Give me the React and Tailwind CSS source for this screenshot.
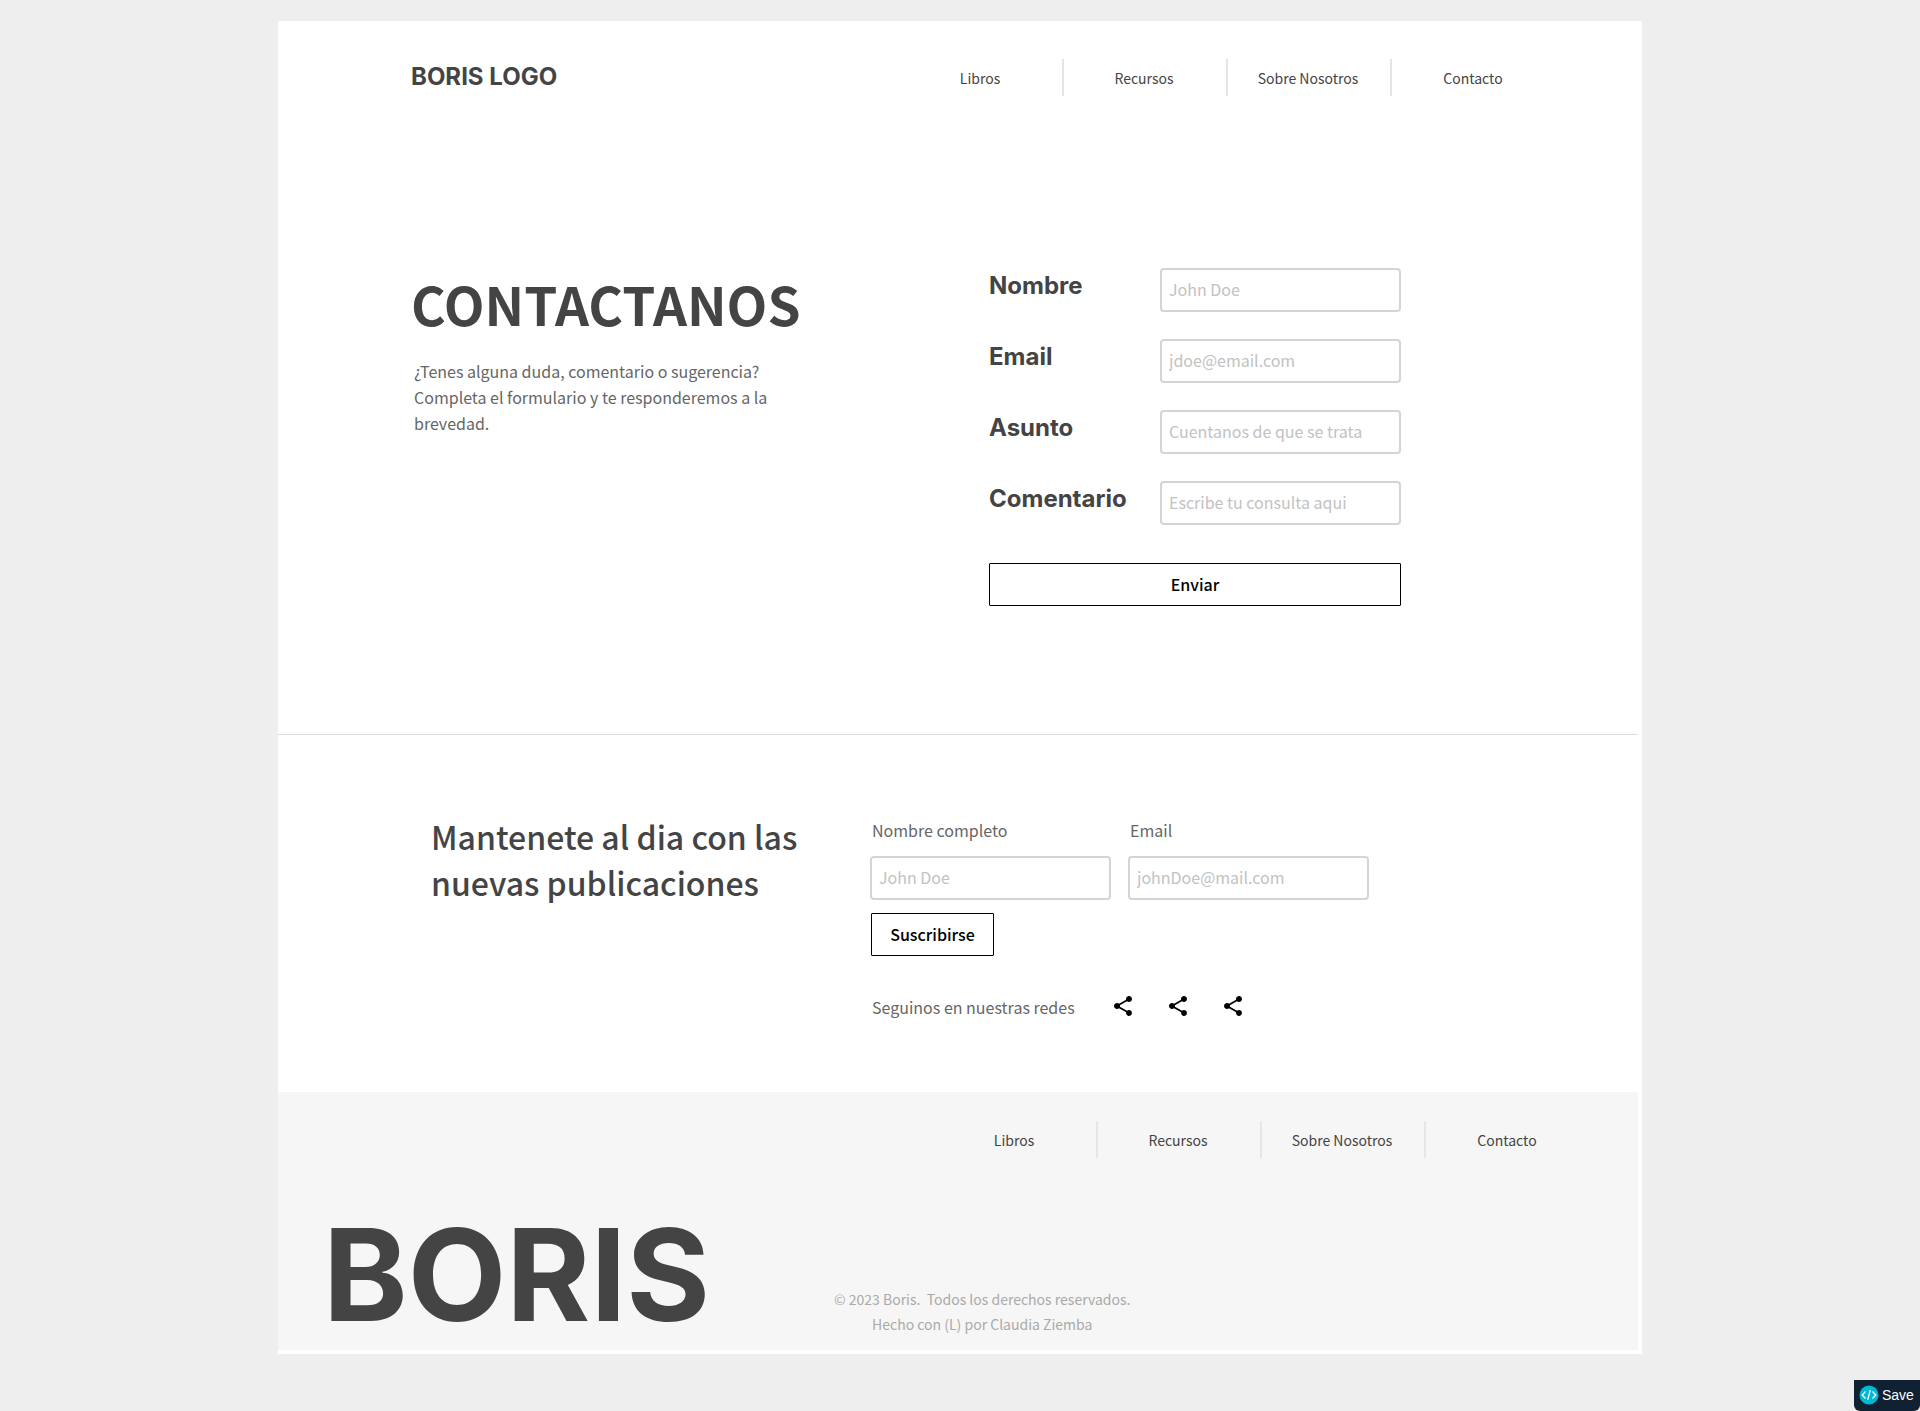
import { MdShare } from "react-icons/md";

const links = ["Libros", "Recursos", "Sobre Nosotros", "Contacto"];

const contactFields = [
  { id: "nombre", label: "Nombre", type: "text", placeholder: "John Doe" },
  { id: "email", label: "Email", type: "email", placeholder: "jdoe@email.com" },
  { id: "asunto", label: "Asunto", type: "text", placeholder: "Cuentanos de que se trata" },
  { id: "comentario", label: "Comentario", type: "text", placeholder: "Escribe tu consulta aqui" },
];

const newsletterFields = [
  { id: "news-nombre", label: "Nombre completo", type: "text", placeholder: "John Doe" },
  { id: "news-email", label: "Email", type: "email", placeholder: "johnDoe@mail.com" },
];

function NavLinks({ label }) {
  return (
    <nav aria-label={label}>
      <ul className="grid grid-cols-4 divide-x-2 divide-[#e6e6e6]">
        {links.map((text) => (
          <li key={text} className="flex h-[37px] w-[164px] items-center justify-center pr-0.5">
            <a href="#" className="text-sm leading-5 whitespace-nowrap text-[#444]">
              {text}
            </a>
          </li>
        ))}
      </ul>
    </nav>
  );
}

function TextField({ id, type, placeholder }) {
  return (
    <input
      id={id}
      type={type}
      placeholder={placeholder}
      className="h-11 w-full min-w-0 rounded border-2 border-[#d4d4d4] bg-white px-[7px] pb-0.5 text-base text-[#444] placeholder:text-[#c2c2c2]"
    />
  );
}

export default function App() {
  return (
    <div className="min-h-screen bg-[#eee] pt-[21px] pb-[57px] font-['Noto_Sans_CJK_JP','Noto_Sans',sans-serif] text-[#444]">
      <div className="mx-auto w-full max-w-[1364px] bg-white pr-1 pb-1">
        <header className="flex items-center justify-between pt-[38px] pr-[82px] pl-[133px]">
          <a href="#" className="pb-0.5 font-['Inter',sans-serif] text-2xl leading-7 font-bold">
            BORIS LOGO
          </a>
          <NavLinks label="Principal" />
        </header>

        <main>
          <section className="mt-[172px] grid grid-cols-[minmax(0,578fr)_minmax(0,412fr)] pr-[237px] pb-32 pl-[133px]">
            <div className="pt-[3px]">
              <h1 className="text-[53px] leading-[64px] font-bold">CONTACTANOS</h1>
              <p className="mt-[23px] max-w-[372px] pl-[3px] text-base leading-[26px] text-[#666]">
                ¿Tenes alguna duda, comentario o sugerencia? Completa el formulario y te
                responderemos a la brevedad.
              </p>
            </div>
            <form>
              <div className="flex flex-col gap-[27px]">
                {contactFields.map((field) => (
                  <div key={field.id} className="grid grid-cols-[minmax(0,171fr)_minmax(0,241fr)]">
                    <label
                      htmlFor={field.id}
                      className="flex items-center pb-2 font-['Inter',sans-serif] text-2xl leading-7 font-bold"
                    >
                      {field.label}
                    </label>
                    <TextField {...field} />
                  </div>
                ))}
              </div>
              <button
                type="button"
                className="mt-[38px] h-[43px] w-full rounded-[1px] border border-black pb-0.5 text-base font-medium text-black"
              >
                Enviar
              </button>
            </form>
          </section>

          <section className="grid grid-cols-[minmax(0,439fr)_minmax(0,499fr)] border-t border-[#ddd] pt-[78px] pr-[269px] pb-[73px] pl-[153px]">
            <h2 className="max-w-[400px] text-[32px] leading-[46px] font-medium">
              Mantenete al dia con las nuevas publicaciones
            </h2>
            <div className="pt-[5px]">
              <form>
                <div className="grid grid-cols-2 gap-[17px]">
                  {newsletterFields.map((field) => (
                    <div key={field.id} className="flex flex-col gap-3.5">
                      <label htmlFor={field.id} className="pl-0.5 text-base leading-6 text-[#666]">
                        {field.label}
                      </label>
                      <TextField {...field} />
                    </div>
                  ))}
                </div>
                <button
                  type="button"
                  className="mt-[13px] ml-px h-[43px] w-[123px] rounded-[1px] border border-black pb-0.5 text-base font-medium text-black"
                >
                  Suscribirse
                </button>
              </form>
              <div className="mt-[38px] flex items-start">
                <p className="w-[241px] pt-px pl-0.5 text-base leading-6 text-[#666]">
                  Seguinos en nuestras redes
                </p>
                <div className="flex gap-[31px]">
                  {[1, 2, 3].map((n) => (
                    <a key={n} href="#" aria-label={`Red social ${n}`}>
                      <MdShare className="size-6 text-black" />
                    </a>
                  ))}
                </div>
              </div>
            </div>
          </section>
        </main>

        <footer className="bg-[#f6f6f6] pt-[29px] pb-3">
          <div className="flex justify-end pr-12">
            <NavLinks label="Pie de página" />
          </div>
          <div className="mt-[54px] grid grid-cols-[508px_1fr] items-end pl-[45px]">
            <p className="font-['Inter',sans-serif] text-[128px] leading-[126px] font-bold">
              BORIS
            </p>
            <p className="justify-self-start pb-px pl-[3px] text-center text-sm leading-[25px] text-[#aaa]">
              © 2023 Boris.&nbsp; Todos los derechos reservados.
              <br />
              Hecho con (L) por Claudia Ziemba
            </p>
          </div>
        </footer>
      </div>

      <button
        type="button"
        className="fixed right-0 bottom-0 flex h-[31px] w-[66px] items-center gap-[3px] rounded-b-md bg-[#0f2132] pb-px pl-[5px] font-['Liberation_Sans',sans-serif] text-sm text-white"
      >
        <svg viewBox="0 0 20 20" className="size-5" aria-hidden="true">
          <circle cx="10" cy="10" r="9.5" fill="#00b8d4" />
          <path
            d="M6.5 6.5 3.2 10l3.3 3.5M13.5 6.5l3.3 3.5-3.3 3.5M11.3 5.2 8.7 14.8"
            fill="none"
            stroke="#fff"
            strokeWidth="1.3"
          />
        </svg>
        Save
      </button>
    </div>
  );
}
